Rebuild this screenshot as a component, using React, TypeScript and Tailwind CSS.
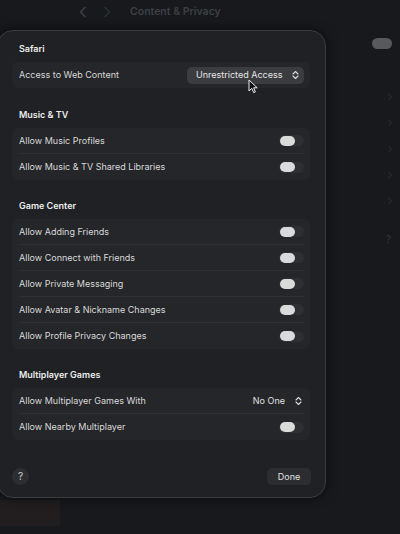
import React from "react";

const UpDown = ({ className = "" }: { className?: string }) => (
  <svg width="7" height="10" viewBox="0 0 7 10" className={className}>
    <path d="M1 4 L3.5 1.5 L6 4" fill="none" stroke="#d8d8d8" strokeWidth="1.1" strokeLinecap="round" strokeLinejoin="round" />
    <path d="M1 6 L3.5 8.5 L6 6" fill="none" stroke="#d8d8d8" strokeWidth="1.1" strokeLinecap="round" strokeLinejoin="round" />
  </svg>
);

const Toggle = () => (
  <div className="w-[25px] h-[11px] rounded-full bg-[#2d2f32] flex items-center px-[0.5px]">
    <div className="w-[15px] h-[10px] rounded-full bg-[#dadada]" />
  </div>
);

const Row = ({ label, right, last }: { label: string; right: React.ReactNode; last?: boolean }) => (
  <div className={`h-[26px] ml-[7px] mr-[6px] flex items-center justify-between ${last ? "" : "border-b border-[#2e3033]"}`}>
    <span className="text-[9px] text-[#d9d9d9]">{label}</span>
    {right}
  </div>
);

const Heading = ({ children }: { children: React.ReactNode }) => (
  <div className="h-[14px] flex items-center pl-[7px] text-[9px] font-semibold text-[#ececec]">{children}</div>
);

const Group = ({ children }: { children: React.ReactNode }) => (
  <div className="mt-[6px] rounded-[6px] bg-[#242629]">{children}</div>
);

export default function App() {
  return (
    <div className="relative w-[400px] h-[534px] overflow-hidden bg-[#17191c] font-['Inter',sans-serif]">
      {/* background window */}
      <div className="h-[23px] flex items-center pl-[78px] text-[#3a3d42]">
        <svg width="10" height="12" viewBox="0 0 10 12"><path d="M7 1.5 L2.5 6 L7 10.5" fill="none" stroke="#3c3f44" strokeWidth="1.6" strokeLinecap="round" strokeLinejoin="round" /></svg>
        <svg className="ml-[14px]" width="10" height="12" viewBox="0 0 10 12"><path d="M3 1.5 L7.5 6 L3 10.5" fill="none" stroke="#2c2f33" strokeWidth="1.6" strokeLinecap="round" strokeLinejoin="round" /></svg>
        <span className="ml-[18px] text-[10.5px] font-semibold text-[#3d4045]">Content &amp; Privacy</span>
      </div>
      <div className="flex justify-end pr-[8px] mt-[15px]">
        <div className="w-[20px] h-[11px] rounded-full bg-[#57595d]" />
      </div>
      <div className="flex flex-col items-end pr-[7px] mt-[43px] gap-[16px]">
        {[0, 1, 2, 3, 4].map((i) => (
          <svg key={i} width="6" height="10" viewBox="0 0 6 10"><path d="M1.5 2 L4.5 5 L1.5 8" fill="none" stroke="#26292c" strokeWidth="1.2" /></svg>
        ))}
        <span className="text-[10px] text-[#34363a] mt-[10px] mr-[2px]">?</span>
      </div>
      <div className="absolute left-0 top-[500px] w-[60px] h-[26px] bg-[#221e1f]" />

      {/* sheet */}
      <div className="absolute left-[-3px] top-[30px] w-[329px] h-[468px] rounded-[16px] bg-[#1f2124] border border-[#3a3c3f] pl-[14px] pr-[15px] pt-[11px] flex flex-col shadow-[0_0_12px_rgba(0,0,0,0.6)]">
        <Heading>Safari</Heading>
        <Group>
          <div className="h-[26px] ml-[7px] mr-[6px] flex items-center justify-between">
            <span className="text-[9px] text-[#d9d9d9]">Access to Web Content</span>
            <div className="w-[117px] h-[17px] rounded-[5px] bg-[#3a3c40] flex items-center justify-between pl-[9px] pr-[5px]">
              <span className="text-[9px] text-[#e6e6e6]">Unrestricted Access</span>
              <UpDown />
            </div>
          </div>
        </Group>

        <div className="mt-[20px]"><Heading>Music &amp; TV</Heading></div>
        <Group>
          <Row label="Allow Music Profiles" right={<Toggle />} />
          <Row label="Allow Music & TV Shared Libraries" right={<Toggle />} last />
        </Group>

        <div className="mt-[19px]"><Heading>Game Center</Heading></div>
        <Group>
          <Row label="Allow Adding Friends" right={<Toggle />} />
          <Row label="Allow Connect with Friends" right={<Toggle />} />
          <Row label="Allow Private Messaging" right={<Toggle />} />
          <Row label="Allow Avatar & Nickname Changes" right={<Toggle />} />
          <Row label="Allow Profile Privacy Changes" right={<Toggle />} last />
        </Group>

        <div className="mt-[19px]"><Heading>Multiplayer Games</Heading></div>
        <Group>
          <Row
            label="Allow Multiplayer Games With"
            right={
              <div className="flex items-center gap-[10px] pr-[2px]">
                <span className="text-[9px] text-[#e0e0e0]">No One</span>
                <UpDown />
              </div>
            }
          />
          <Row label="Allow Nearby Multiplayer" right={<Toggle />} last />
        </Group>

        <div className="mt-auto mb-[12px] flex items-center justify-between">
          <div className="w-[17px] h-[17px] rounded-full bg-[#2c2e32] flex items-center justify-center text-[10px] text-[#cfcfcf]">?</div>
          <div className="w-[44px] h-[17px] -mr-[1px] rounded-[5px] bg-[#2b2d31] flex items-center justify-center text-[9px] text-[#e0e0e0]">Done</div>
        </div>
      </div>

      {/* cursor */}
      <svg className="absolute left-[248px] top-[79px]" width="10" height="15" viewBox="0 0 10 15">
        <path d="M1 1 L1 12 L3.8 9.4 L5.7 13.6 L7.4 12.9 L5.6 8.8 L9.2 8.8 Z" fill="#111" stroke="#eee" strokeWidth="1" strokeLinejoin="round" />
      </svg>
    </div>
  );
}
